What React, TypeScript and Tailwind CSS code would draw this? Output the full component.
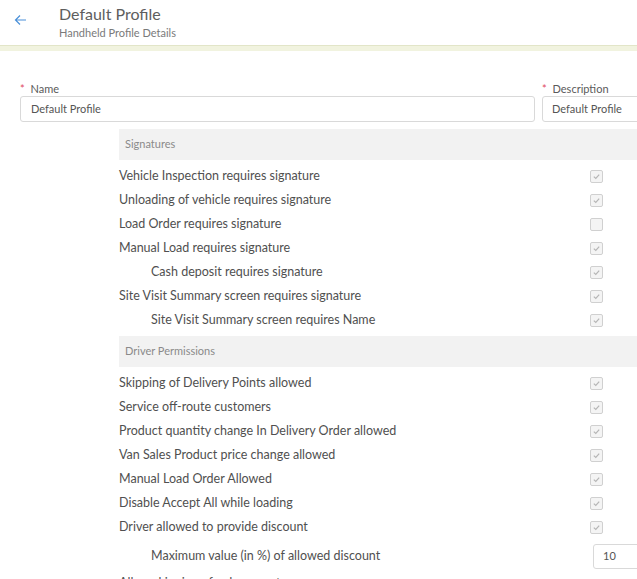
import React from "react";

const font = { fontFamily: "Lato, 'Open Sans', 'Liberation Sans', sans-serif" };

function Check({ checked }: { checked: boolean }) {
  return (
    <div className="w-[13px] h-[13px] border border-[#d0d0d0] bg-[#f4f4f4] rounded-[2px] flex items-center justify-center">
      {checked && (
        <svg width="9" height="9" viewBox="0 0 10 10">
          <path d="M2 5.2 L4.2 7.2 L8 3" fill="none" stroke="#b5b5b5" strokeWidth="1.3" />
        </svg>
      )}
    </div>
  );
}

function Row({ label, checked, indent }: { label: string; checked: boolean; indent?: boolean }) {
  return (
    <div className="flex items-center h-[24px]">
      <div className={`w-[471px] text-[12.5px] text-[#505050] ${indent ? "pl-[32px]" : ""}`}>{label}</div>
      <Check checked={checked} />
    </div>
  );
}

function Header({ title }: { title: string }) {
  return (
    <div className="h-[31px] bg-[#f2f2f2] flex items-center pl-[6px] text-[11px] text-[#8a8a8a]">{title}</div>
  );
}

export default function App() {
  const sig: [string, boolean, boolean][] = [
    ["Vehicle Inspection requires signature", true, false],
    ["Unloading of vehicle requires signature", true, false],
    ["Load Order requires signature", false, false],
    ["Manual Load requires signature", true, false],
    ["Cash deposit requires signature", true, true],
    ["Site Visit Summary screen requires signature", true, false],
    ["Site Visit Summary screen requires Name", true, true],
  ];
  const drv: [string, boolean, boolean][] = [
    ["Skipping of Delivery Points allowed", true, false],
    ["Service off-route customers", true, false],
    ["Product quantity change In Delivery Order allowed", true, false],
    ["Van Sales Product price change allowed", true, false],
    ["Manual Load Order Allowed", true, false],
    ["Disable Accept All while loading", true, false],
    ["Driver allowed to provide discount", true, false],
  ];
  return (
    <div className="w-[637px] h-[579px] overflow-hidden bg-white" style={font}>
      <div className="w-[800px]">
        <div className="h-[45px] flex">
          <div className="w-[59px] flex items-start pt-[14px] pl-[14px]">
            <svg width="13" height="12" viewBox="0 0 13 12">
              <path d="M12 6 H1.5 M6 1.5 L1.5 6 L6 10.5" fill="none" stroke="#4a90d9" strokeWidth="1.2" />
            </svg>
          </div>
          <div className="flex flex-col pt-[4px]">
            <div className="text-[16px] leading-[20px] text-[#5e5e5e]">Default Profile</div>
            <div className="text-[11px] leading-[16px] text-[#7a7a7a] mt-[1px]">Handheld Profile Details</div>
          </div>
        </div>
        <div className="h-[6px] border-t border-[#e2e5c8] bg-[#f1f3df]" />
        <div className="pt-[31px] pl-[20px] flex gap-[7px]">
          <div className="w-[515px]">
            <div className="text-[11px] leading-[14px] text-[#5a5a5a] h-[14px]">
              <span className="text-[#e0475e]">*</span> <span className="ml-[3px]">Name</span>
            </div>
            <div className="h-[26px] border border-[#d9d9d9] rounded-[3px] flex items-center pl-[10px] text-[11px] text-[#555]">
              Default Profile
            </div>
          </div>
          <div className="w-[200px]">
            <div className="text-[11px] leading-[14px] text-[#5a5a5a] h-[14px]">
              <span className="text-[#e0475e]">*</span> <span className="ml-[3px]">Description</span>
            </div>
            <div className="h-[26px] border border-[#d9d9d9] rounded-[3px] flex items-center pl-[9px] text-[11px] text-[#555]">
              Default Profile
            </div>
          </div>
        </div>
        <div className="ml-[119px] mt-[7px]">
          <Header title="Signatures" />
          <div className="py-[4px]">
            {sig.map(([l, c, i]) => (
              <Row key={l} label={l} checked={c} indent={i} />
            ))}
          </div>
          <Header title="Driver Permissions" />
          <div className="pt-[4px]">
            {drv.map(([l, c, i]) => (
              <Row key={l} label={l} checked={c} indent={i} />
            ))}
            <div className="flex items-center h-[30px] mt-[2px]">
              <div className="w-[474px] pl-[32px] text-[12.5px] text-[#505050]">Maximum value (in %) of allowed discount</div>
              <div className="w-[80px] h-[25px] border border-[#d9d9d9] rounded-[3px] flex items-center pl-[9px] text-[11px] text-[#555]">
                10
              </div>
            </div>
            <div className="flex items-center h-[24px]">
              <div className="text-[12.5px] text-[#505050]">Allow skipping of a document</div>
            </div>
          </div>
        </div>
      </div>
    </div>
  );
}
